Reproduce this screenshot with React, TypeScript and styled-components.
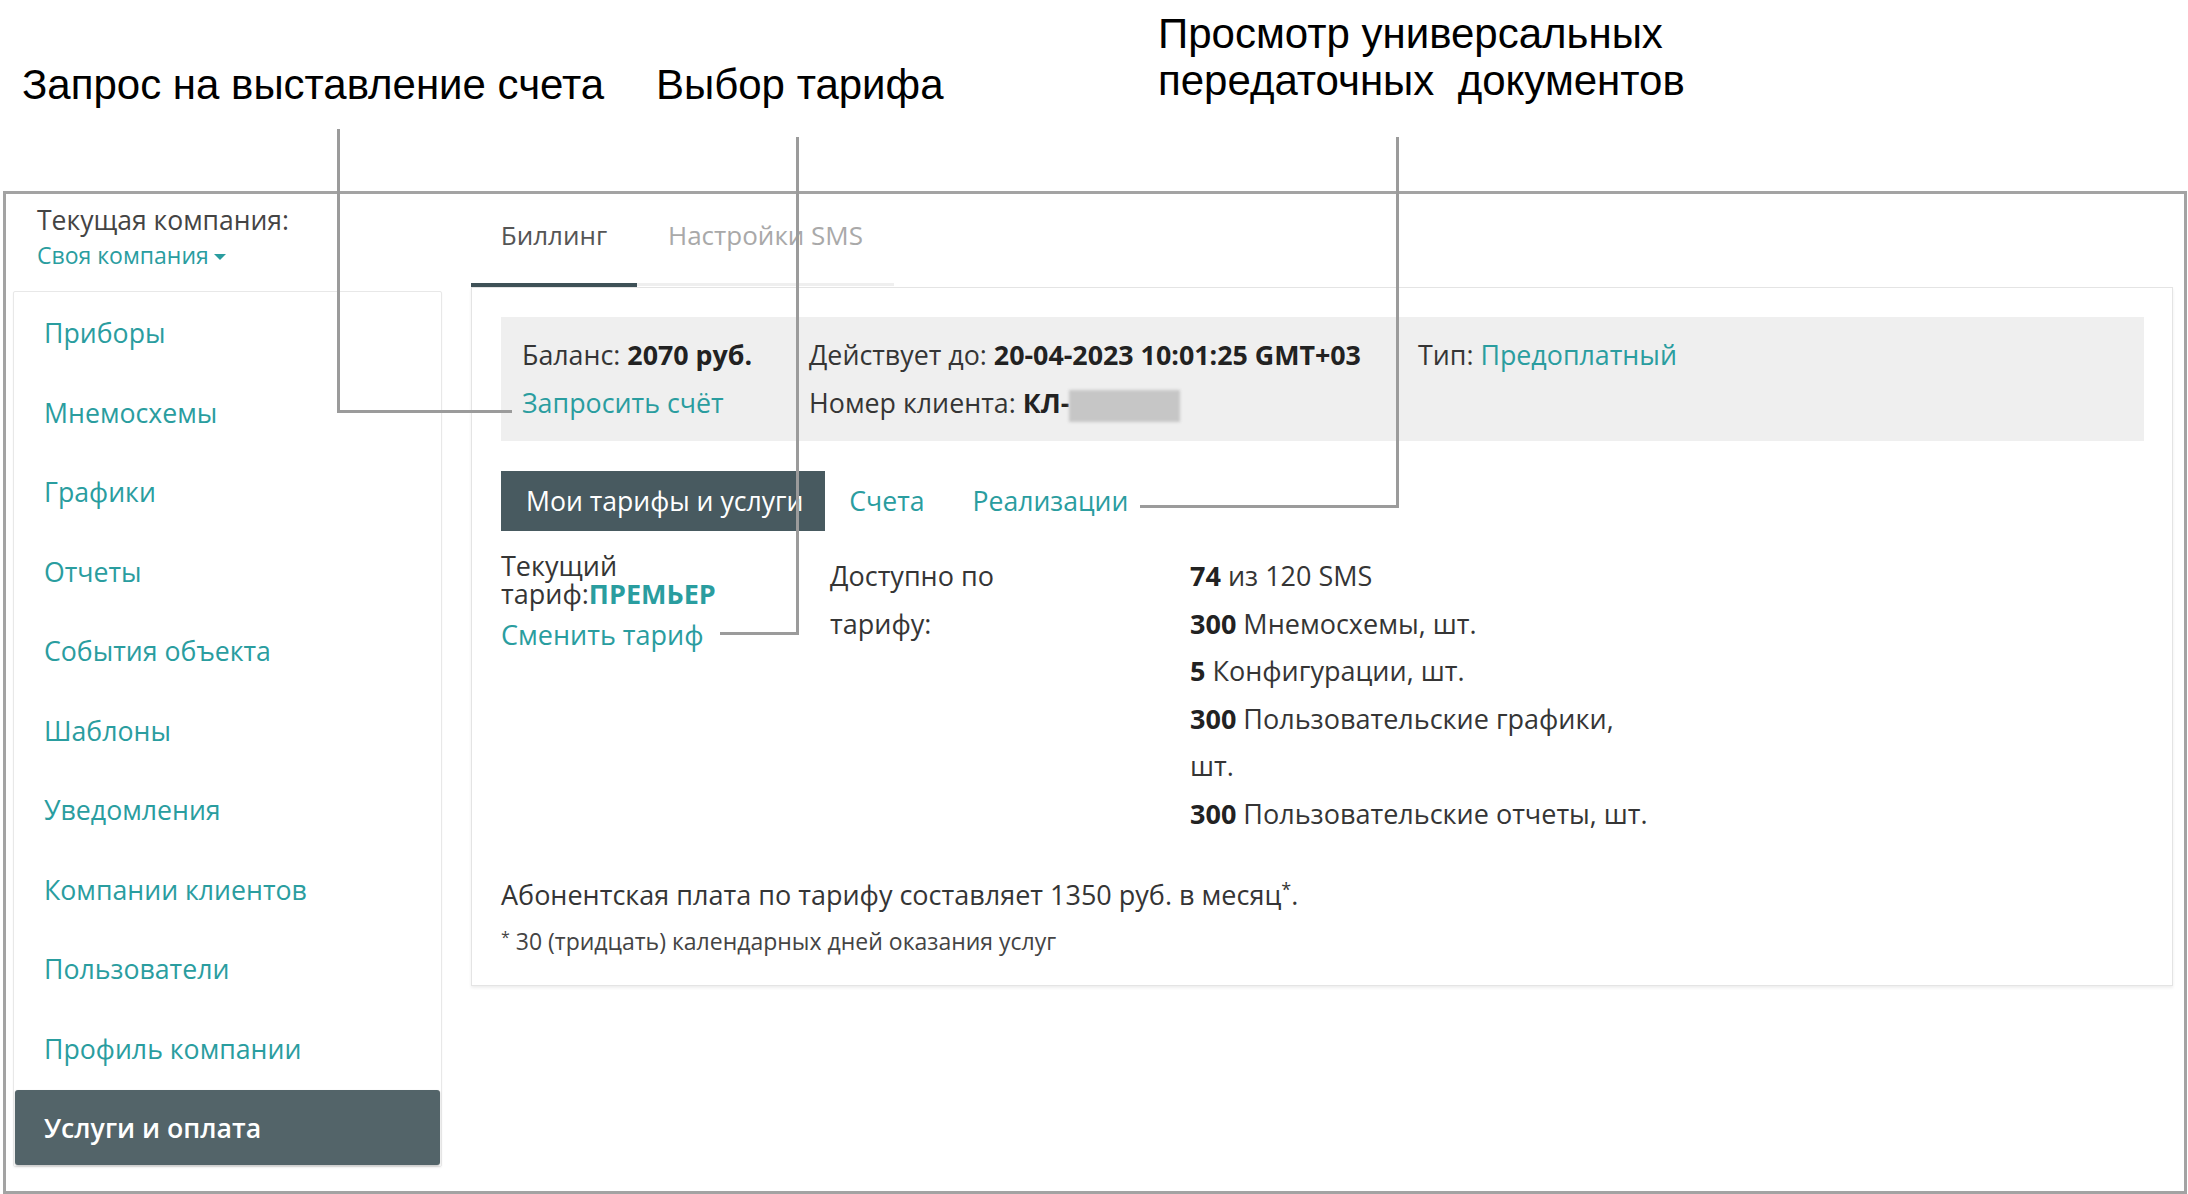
import React from "react";
import styled, { createGlobalStyle } from "styled-components";

const teal = "#2a9d9f";
const ink = "#353535";
const callout = "#9b9b9b";

const GlobalStyle = createGlobalStyle`
  html, body {
    margin: 0;
    padding: 0;
    background: #fff;
  }
  body {
    font-family: "Open Sans", "Noto Sans", sans-serif;
    color: ${ink};
  }
  * {
    box-sizing: border-box;
  }
`;

const Page = styled.div`
  position: relative;
  width: 2188px;
  height: 1194px;
  overflow: hidden;
`;

const Captions = styled.div`
  display: flex;
  height: 191px;
  padding-left: 22px;
`;

const Caption = styled.div<{ $width?: number; $top: number }>`
  width: ${(p) => (p.$width ? `${p.$width}px` : "auto")};
  padding-top: ${(p) => p.$top}px;
  font-family: "Liberation Sans", Arial, sans-serif;
  font-size: 42px;
  line-height: 47px;
  color: #000;
  white-space: pre;
`;

const Connector = styled.div<{ $left: number; $top: number; $w: number; $h: number; $side: "left" | "right" }>`
  position: absolute;
  left: ${(p) => p.$left}px;
  top: ${(p) => p.$top}px;
  width: ${(p) => p.$w}px;
  height: ${(p) => p.$h}px;
  border-bottom: 3px solid ${callout};
  border-${(p) => p.$side}: 3px solid ${callout};
  pointer-events: none;
`;

const Frame = styled.div`
  display: flex;
  margin-left: 3px;
  width: 2184px;
  height: 1003px;
  border: 3px solid #a3a3a3;
`;

const Sidebar = styled.aside`
  width: 436px;
  padding-left: 7px;
  flex-shrink: 0;
`;

const CompanyBlock = styled.div`
  padding: 9px 0 0 24px;
`;

const CompanyLabel = styled.div`
  font-size: 26.5px;
  line-height: 34px;
  color: #444;
`;

const CompanyPicker = styled.div`
  margin-top: 4px;
  font-size: 23px;
  line-height: 28px;
  color: ${teal};
  display: flex;
  align-items: center;
`;

const Caret = styled.span`
  display: inline-block;
  margin: 4px 0 0 5px;
  width: 0;
  height: 0;
  border-left: 6px solid transparent;
  border-right: 6px solid transparent;
  border-top: 6px solid ${teal};
`;

const Menu = styled.nav`
  margin-top: 22px;
  width: 429px;
  display: flex;
  flex-direction: column;
  gap: 4.5px;
  padding: 3px 1px 1px 1px;
  border: 1px solid #e8e8e8;
  border-radius: 2px;
  box-shadow: 0 1px 2px rgba(0, 0, 0, 0.05);
`;

const MenuItem = styled.div<{ $active?: boolean }>`
  height: 75px;
  display: flex;
  align-items: center;
  padding-left: 29px;
  font-size: 26.7px;
  font-weight: ${(p) => (p.$active ? 600 : 400)};
  color: ${(p) => (p.$active ? "#fff" : teal)};
  background: ${(p) => (p.$active ? "#536469" : "transparent")};
  border-radius: 3px;
  box-shadow: ${(p) => (p.$active ? "0 1px 2px rgba(0,0,0,0.25)" : "none")};
`;

const Main = styled.main`
  margin-left: 29px;
  width: 1702px;
`;

const Tabs = styled.div`
  display: flex;
  padding-top: 24px;
`;

const Tab = styled.div<{ $active?: boolean; $width: number }>`
  width: ${(p) => p.$width}px;
  text-align: center;
  font-size: 26px;
  line-height: 34px;
  padding-bottom: 31px;
  color: ${(p) => (p.$active ? "#555" : "#a9a9a9")};
  border-bottom: ${(p) => (p.$active ? "4px solid #3e5157" : "3px solid #efefef")};
  margin-bottom: ${(p) => (p.$active ? 0 : 1)}px;
`;

const Panel = styled.section`
  border: 1px solid #e4e4e4;
  box-shadow: 0 2px 3px rgba(0, 0, 0, 0.07);
  padding: 29px 28px 31px 29px;
`;

const InfoBox = styled.div`
  display: flex;
  background: #efefef;
  padding: 14px 21px;
  font-size: 26.8px;
  line-height: 48px;
`;

const InfoCol = styled.div<{ $width?: number }>`
  width: ${(p) => (p.$width ? `${p.$width}px` : "auto")};
  white-space: nowrap;
`;

const Strong = styled.b<{ $teal?: boolean }>`
  font-weight: 700;
  color: ${(p) => (p.$teal ? teal : "#222")};
`;

const Link = styled.span`
  color: ${teal};
`;

const Masked = styled.span`
  display: inline-block;
  width: 111px;
  height: 32px;
  vertical-align: -9px;
  background: #c6c6c6;
  filter: blur(1.5px);
`;

const SubTabs = styled.div`
  display: flex;
  margin-top: 30px;
  height: 60px;
  font-size: 26.6px;
  line-height: 60px;
`;

const SubTab = styled.div<{ $active?: boolean }>`
  padding: ${(p) => (p.$active ? "0 22px 0 25px" : "0 24px")};
  color: ${(p) => (p.$active ? "#fff" : teal)};
  background: ${(p) => (p.$active ? "#485a60" : "transparent")};
  white-space: nowrap;
`;

const Plan = styled.div`
  display: grid;
  grid-template-columns: 329px 360px 480px;
  margin-top: 21px;
  font-size: 27px;
`;

const PlanName = styled.div`
  max-width: 230px;
  line-height: 28px;
`;

const ChangePlan = styled.div`
  margin-top: 13px;
  line-height: 28px;
  color: ${teal};
`;

const PlanLabel = styled.div`
  max-width: 220px;
  line-height: 47.6px;
`;

const Limits = styled.div`
  line-height: 47.6px;
`;

const LimitRow = styled.div`
  white-space: pre-line;
`;

const Fee = styled.div`
  margin-top: 40px;
  font-size: 27px;
  line-height: 34px;
  sup {
    font-size: 18px;
    line-height: 0;
    vertical-align: 9px;
  }
`;

const Footnote = styled.div`
  margin-top: 16px;
  font-size: 23px;
  line-height: 26px;
  color: #444;
  sup {
    font-size: 16px;
    line-height: 0;
    vertical-align: 7px;
  }
`;

const menu = [
  "Приборы",
  "Мнемосхемы",
  "Графики",
  "Отчеты",
  "События объекта",
  "Шаблоны",
  "Уведомления",
  "Компании клиентов",
  "Пользователи",
  "Профиль компании",
  "Услуги и оплата",
];

const limits: [string, string][] = [
  ["74", "из 120 SMS"],
  ["300", "Мнемосхемы, шт."],
  ["5", "Конфигурации, шт."],
  ["300", "Пользовательские графики,\nшт."],
  ["300", "Пользовательские отчеты, шт."],
];

export default function App() {
  return (
    <Page>
      <GlobalStyle />
      <Captions>
        <Caption $width={634} $top={61}>
          Запрос на выставление счета
        </Caption>
        <Caption $width={502} $top={61}>
          Выбор тарифа
        </Caption>
        <Caption $top={10}>
          {"Просмотр универсальных\nпередаточных  документов"}
        </Caption>
      </Captions>

      <Frame>
        <Sidebar>
          <CompanyBlock>
            <CompanyLabel>Текущая компания:</CompanyLabel>
            <CompanyPicker>
              Своя компания
              <Caret />
            </CompanyPicker>
          </CompanyBlock>
          <Menu>
            {menu.map((item) => (
              <MenuItem key={item} $active={item === "Услуги и оплата"}>
                {item}
              </MenuItem>
            ))}
          </Menu>
        </Sidebar>

        <Main>
          <Tabs>
            <Tab $active $width={166}>
              Биллинг
            </Tab>
            <Tab $width={257}>Настройки SMS</Tab>
          </Tabs>
          <Panel>
            <InfoBox>
              <InfoCol $width={287}>
                <div>
                  Баланс: <Strong>2070 руб.</Strong>
                </div>
                <div>
                  <Link>Запросить счёт</Link>
                </div>
              </InfoCol>
              <InfoCol $width={609}>
                <div>
                  Действует до: <Strong>20-04-2023 10:01:25 GMT+03</Strong>
                </div>
                <div>
                  Номер клиента: <Strong>КЛ-</Strong>
                  <Masked />
                </div>
              </InfoCol>
              <InfoCol>
                Тип: <Link>Предоплатный</Link>
              </InfoCol>
            </InfoBox>

            <SubTabs>
              <SubTab $active>Мои тарифы и услуги</SubTab>
              <SubTab>Счета</SubTab>
              <SubTab>Реализации</SubTab>
            </SubTabs>

            <Plan>
              <div>
                <PlanName>
                  Текущий тариф:<Strong $teal>ПРЕМЬЕР</Strong>
                </PlanName>
                <ChangePlan>Сменить тариф</ChangePlan>
              </div>
              <PlanLabel>Доступно по тарифу:</PlanLabel>
              <Limits>
                {limits.map(([n, text]) => (
                  <LimitRow key={text}>
                    <Strong>{n}</Strong> {text}
                  </LimitRow>
                ))}
              </Limits>
            </Plan>

            <Fee>
              Абонентская плата по тарифу составляет 1350 руб. в месяц<sup>*</sup>.
            </Fee>
            <Footnote>
              <sup>*</sup> 30 (тридцать) календарных дней оказания услуг
            </Footnote>
          </Panel>
        </Main>
      </Frame>

      <Connector $left={337} $top={129} $w={175} $h={284} $side="left" />
      <Connector $left={720} $top={137} $w={79} $h={498} $side="right" />
      <Connector $left={1140} $top={137} $w={259} $h={371} $side="right" />
    </Page>
  );
}
